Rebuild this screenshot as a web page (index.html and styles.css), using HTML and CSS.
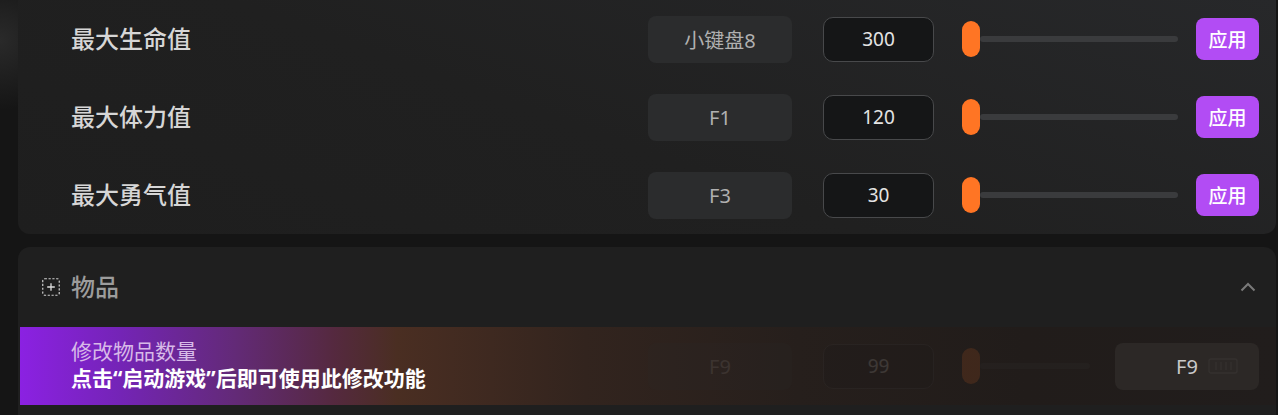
FILE: index.html
```html
<!doctype html>
<html lang="zh-CN">
    <head>
        <meta charset="UTF-8" />
        <meta name="viewport" content="width=device-width, initial-scale=1.0" />
        <title>修改器</title>
        <link rel="stylesheet" href="styles.css">
    </head>
    <body>
        <div class="page">
            <!-- Stats -->
            <section class="panel panel-stats">
                <div class="row">
                    <span class="label">最大生命值</span>
                    <span class="key">小键盘8</span>
                    <span class="num">300</span>
                    <div class="slider"><span class="thumb"></span><span class="track"></span></div>
                    <button class="apply">应用</button>
                </div>
                <div class="row">
                    <span class="label">最大体力值</span>
                    <span class="key">F1</span>
                    <span class="num">120</span>
                    <div class="slider"><span class="thumb"></span><span class="track"></span></div>
                    <button class="apply">应用</button>
                </div>
                <div class="row">
                    <span class="label">最大勇气值</span>
                    <span class="key">F3</span>
                    <span class="num">30</span>
                    <div class="slider"><span class="thumb"></span><span class="track"></span></div>
                    <button class="apply">应用</button>
                </div>
            </section>

            <!-- Items -->
            <section class="panel panel-items">
                <div class="panel-head">
                    <svg class="head-icon" width="18" height="18" viewBox="0 0 18 18">
                        <rect x="0.75" y="0.75" width="16.5" height="16.5" rx="2" fill="none" stroke="#cfcfcf" stroke-width="1.2" stroke-dasharray="2.2 1.6" />
                        <path d="M9 5.2v7.6M5.2 9h7.6" stroke="#dcdcdc" stroke-width="1.3" />
                    </svg>
                    <span class="head-title">物品</span>
                    <svg class="chevron" width="16" height="10" viewBox="0 0 16 10">
                        <path d="M1.5 8.5L8 2l6.5 6.5" fill="none" stroke="#7a7a7a" stroke-width="2" />
                    </svg>
                </div>
                <div class="row locked">
                    <div class="label notice">
                        <span class="notice-title">修改物品数量</span>
                        <span class="notice-text">点击“启动游戏”后即可使用此修改功能</span>
                    </div>
                    <span class="key dim">F9</span>
                    <span class="num dim">99</span>
                    <div class="slider slider-short dim"><span class="thumb"></span><span class="track"></span></div>
                    <span class="hotkey">
                        <span></span>
                        <span class="hotkey-text">F9</span>
                        <svg class="hotkey-icon" width="30" height="16" viewBox="0 0 30 16">
                            <rect x="1" y="1" width="28" height="14" rx="2" fill="none" stroke="#ffffff" stroke-width="1.4" />
                            <path d="M8 4v8M13 4v8M18 4v8M23 4v8" stroke="#ffffff" stroke-width="1.4" />
                        </svg>
                    </span>
                </div>
            </section>
        </div>
    </body>
</html>
```

FILE: styles.css
```css
body {
    margin: 0;
    font-family: "Noto Sans", "Noto Sans CJK SC", sans-serif;
    background: radial-gradient(circle at 0 40px, #2a2a2a 0, #151515 70px) #141414;
    color: #d6d6d6;
}

.page {
    padding: 0 2px 0 18px;
    height: 415px;
    overflow: hidden;
}

.panel {
    border-radius: 12px;
    background: linear-gradient(200deg, #27282a 0%, #202020 55%, #1e1e1e 100%);
}

.panel-stats {
    border-radius: 0 0 12px 12px;
}

.panel-items {
    margin-top: 13px;
    height: 200px;
    background: #1f1f1f;
}

.row {
    display: flex;
    align-items: center;
    height: 78px;
    padding: 0 17px 0 53px;
}

.label {
    flex: 1;
    padding-bottom: 4px;
    font-size: 24px;
    font-weight: 500;
    color: #d6d6d6;
}

.key {
    display: flex;
    align-items: center;
    justify-content: center;
    width: 144px;
    height: 47px;
    border-radius: 8px;
    background: #2b2c2d;
    color: #b0b0b0;
    font-size: 20px;
}

.num {
    display: flex;
    align-items: center;
    justify-content: center;
    box-sizing: border-box;
    width: 111px;
    height: 45px;
    margin-left: 31px;
    border: 1.5px solid #48494b;
    border-radius: 10px;
    background: #151617;
    color: #e4e4e4;
    font-size: 19px;
}

.slider {
    display: flex;
    align-items: center;
    width: 216px;
    height: 36px;
    margin-left: 28px;
}

.thumb {
    width: 18px;
    height: 36px;
    border-radius: 9px;
    background: #ff7524;
}

.track {
    flex: 1;
    height: 6px;
    border-radius: 3px;
    background: #3a3b3d;
}

.apply {
    width: 63px;
    height: 42px;
    margin-left: 18px;
    border: none;
    border-radius: 8px;
    background: #b24cf4;
    color: #fff;
    font-family: inherit;
    font-size: 19px;
    font-weight: 500;
    padding: 0;
}

.panel-head {
    display: flex;
    align-items: center;
    height: 80px;
    padding: 0 20px 0 24px;
}

.head-icon {
    margin-right: 11px;
}

.head-title {
    flex: 1;
    padding-bottom: 3px;
    font-size: 24px;
    font-weight: 500;
    color: #9c9c9c;
}

.row.locked {
    margin: 0 0 0 2px;
    padding-left: 51px;
    background: linear-gradient(90deg, #8b21e2 0%, #7424b6 8%, #632a78 17%, #55293f 25%, #4a2e22 30%, #32241e 45%, #261f1c 62%, #211c1a 80%, #211d1c 100%);
}

.notice {
    display: flex;
    flex-direction: column;
    padding-bottom: 2px;
    font-size: 21px;
    line-height: 27px;
}

.notice-title {
    color: #d7b9e8;
    font-weight: 400;
}

.notice-text {
    color: #fff;
    font-weight: 700;
}

.dim {
    opacity: 0.13;
}

.slider-short {
    width: 128px;
}

.hotkey {
    display: grid;
    grid-template-columns: 1fr auto 1fr;
    align-items: center;
    width: 144px;
    height: 47px;
    margin-left: 25px;
    border-radius: 8px;
    background: #2c2826;
    color: #c9c9c9;
    font-size: 20px;
}

.hotkey-icon {
    margin-left: 10px;
    opacity: 0.035;
}
```
